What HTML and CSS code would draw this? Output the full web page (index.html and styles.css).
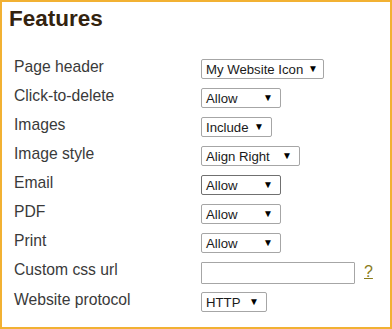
FILE: index.html
```html
<!DOCTYPE html>
<html>
<head>
<meta charset="utf-8">
<link rel="stylesheet" href="styles.css">
</head>
<body>
<div class="panel">
  <h1 class="title">Features</h1>
  <div class="rows">
    <div class="row"><span class="label">Page header</span><span class="sel w123 sel-fit"><span class="val">My Website Icon</span><span class="arrow">▼</span></span></div>
    <div class="row"><span class="label">Click-to-delete</span><span class="sel w80"><span class="val">Allow</span><span class="arrow">▼</span></span></div>
    <div class="row"><span class="label">Images</span><span class="sel w71"><span class="val">Include</span><span class="arrow">▼</span></span></div>
    <div class="row"><span class="label">Image style</span><span class="sel w99"><span class="val">Align Right</span><span class="arrow">▼</span></span></div>
    <div class="row"><span class="label">Email</span><span class="sel w80 focus"><span class="val">Allow</span><span class="arrow">▼</span></span></div>
    <div class="row"><span class="label">PDF</span><span class="sel w80"><span class="val">Allow</span><span class="arrow">▼</span></span></div>
    <div class="row"><span class="label">Print</span><span class="sel w80"><span class="val">Allow</span><span class="arrow">▼</span></span></div>
    <div class="row row-tall"><span class="label">Custom css url</span><span class="text-input"></span><a class="help" href="#">?</a></div>
    <div class="row row-last"><span class="label">Website protocol</span><span class="sel w66"><span class="val">HTTP</span><span class="arrow">▼</span></span></div>
  </div>
</div>
</body>
</html>
```

FILE: styles.css
```css
html, body {
  margin: 0;
  padding: 0;
  background: #ffffff;
}

.panel {
  box-sizing: border-box;
  width: 392px;
  height: 329px;
  border: 2px solid #f2b133;
  padding: 5px 0 0 7px;
  font-family: "Liberation Sans", Arial, sans-serif;
}

.title {
  margin: 0 0 25px 0;
  font-size: 22.5px;
  line-height: 24px;
  font-weight: bold;
  color: #33230f;
}

.rows {
  display: flex;
  flex-direction: column;
}

.row {
  display: flex;
  align-items: flex-start;
  height: 29px;
}

.row-tall {
  height: 30px;
}

.label {
  box-sizing: border-box;
  width: 192px;
  padding: 1px 0 0 5px;
  font-size: 15.7px;
  line-height: 20px;
  color: #3a3a3a;
}

.sel {
  box-sizing: border-box;
  display: inline-flex;
  align-items: center;
  justify-content: space-between;
  height: 20px;
  margin-top: 3px;
  padding: 0 7px 0 4px;
  border: 1px solid #a6a6a6;
  border-radius: 2px;
  font-size: 13.2px;
  color: #1a1a1a;
  background: #ffffff;
}

.sel-fit {
  padding-right: 5px;
}

.focus {
  border-color: #707070;
}

.w123 { width: 123px; }
.w80 { width: 80px; }
.w71 { width: 71px; }
.w99 { width: 99px; }
.w66 { width: 66px; }

.arrow {
  font-size: 10px;
  line-height: 1;
  color: #000000;
}

.text-input {
  box-sizing: border-box;
  display: block;
  width: 154px;
  height: 22px;
  margin-top: 3px;
  border: 1px solid #a6a6a6;
  border-radius: 1px;
}

.help {
  margin-left: 9px;
  margin-top: 3px;
  font-size: 16px;
  line-height: 20px;
  color: #8a7c1c;
  text-decoration: underline;
}
```
